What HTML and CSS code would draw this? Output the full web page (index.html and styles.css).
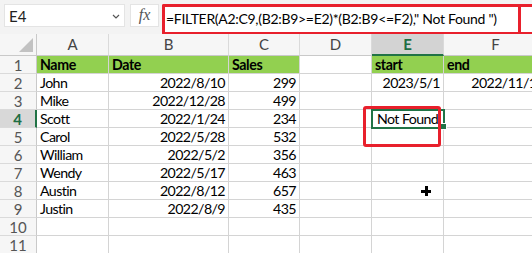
FILE: index.html
```html
<!DOCTYPE html>
<html>

<head>
	<meta charset="utf-8">
	<link rel="stylesheet" href="styles.css">
</head>

<body>
	<div class="bar">
		<div class="namebox">
			<span>E4</span>
			<svg class="chev" width="8" height="5" viewBox="0 0 8 5"><path d="M1 1 L4 4 L7 1" fill="none" stroke="#555" stroke-width="1.2"/></svg>
		</div>
		<div class="fxbox">fx</div>
		<div class="formula">=FILTER(A2:C9,(B2:B9&gt;=E2)*(B2:B9&lt;=F2),"&nbsp;Not Found&nbsp;")</div>
	</div>

	<div class="sheet">
		<div class="hd corner"><span class="tri"></span></div>
		<div class="hd">A</div>
		<div class="hd">B</div>
		<div class="hd">C</div>
		<div class="hd">D</div>
		<div class="hd on">E</div>
		<div class="hd">F</div>

		<div class="rh">1</div>
		<div class="c g b">Name</div>
		<div class="c g b">Date</div>
		<div class="c g b">Sales</div>
		<div class="c"></div>
		<div class="c g b">start</div>
		<div class="c g b">end</div>

		<div class="rh">2</div>
		<div class="c">John</div>
		<div class="c r">2022/8/10</div>
		<div class="c r">299</div>
		<div class="c"></div>
		<div class="c r">2023/5/1</div>
		<div class="c r">2022/11/15</div>

		<div class="rh">3</div>
		<div class="c">Mike</div>
		<div class="c r">2022/12/28</div>
		<div class="c r">499</div>
		<div class="c"></div>
		<div class="c"></div>
		<div class="c"></div>

		<div class="rh on">4</div>
		<div class="c">Scott</div>
		<div class="c r">2022/1/24</div>
		<div class="c r">234</div>
		<div class="c"></div>
		<div class="c sel">&nbsp;Not Found&nbsp;</div>
		<div class="c"></div>

		<div class="rh">5</div>
		<div class="c">Carol</div>
		<div class="c r">2022/5/28</div>
		<div class="c r">532</div>
		<div class="c"></div>
		<div class="c"></div>
		<div class="c"></div>

		<div class="rh">6</div>
		<div class="c">William</div>
		<div class="c r">2022/5/2</div>
		<div class="c r">356</div>
		<div class="c"></div>
		<div class="c"></div>
		<div class="c"></div>

		<div class="rh">7</div>
		<div class="c">Wendy</div>
		<div class="c r">2022/5/17</div>
		<div class="c r">463</div>
		<div class="c"></div>
		<div class="c"></div>
		<div class="c"></div>

		<div class="rh">8</div>
		<div class="c">Austin</div>
		<div class="c r">2022/8/12</div>
		<div class="c r">657</div>
		<div class="c"></div>
		<div class="c"></div>
		<div class="c"></div>

		<div class="rh">9</div>
		<div class="c">Justin</div>
		<div class="c r">2022/8/9</div>
		<div class="c r">435</div>
		<div class="c"></div>
		<div class="c"></div>
		<div class="c"></div>

		<div class="rh">10</div>
		<div class="c"></div>
		<div class="c"></div>
		<div class="c"></div>
		<div class="c"></div>
		<div class="c"></div>
		<div class="c"></div>

		<div class="rh">11</div>
		<div class="c"></div>
		<div class="c"></div>
		<div class="c"></div>
		<div class="c"></div>
		<div class="c"></div>
		<div class="c"></div>

		<!-- overlays -->
		<div class="mark"></div>
		<div class="cursor"></div>
	</div>
</body>

</html>
```

FILE: styles.css
```css
body {
	margin: 0;
	width: 532px;
	height: 253px;
	overflow: hidden;
	background: #fff;
	font-family: Lato, "Liberation Sans", sans-serif;
	color: #000;
}

.bar {
	display: flex;
	gap: 4px;
	height: 34px;
	padding: 4px 0 0 4px;
	box-sizing: border-box;
	background: #f3f3f3;
}

.namebox {
	width: 121px;
	height: 23px;
	box-sizing: border-box;
	background: #fff;
	border: 1px solid #e4e4e4;
	display: flex;
	align-items: center;
	justify-content: space-between;
	padding: 0 4px 0 4px;
	font-size: 15px;
	color: #222;
}

.chev {
	margin-top: 1px;
}

.fxbox {
	width: 29px;
	height: 23px;
	margin-left: 1px;
	box-sizing: border-box;
	background: #fff;
	border: 1px solid #e4e4e4;
	font-family: "Liberation Serif", serif;
	font-style: italic;
	font-size: 16px;
	color: #555;
	text-align: center;
	line-height: 20px;
}

.formula {
	flex: 1;
	height: 31px;
	margin-left: -1px;
	box-sizing: border-box;
	background: #fff;
	border: 3px solid #e8202c;
	border-right: none;
	border-radius: 2px 0 0 2px;
	padding-left: 1px;
	font-size: 14px;
	letter-spacing: -0.3px;
	line-height: 24px;
	white-space: nowrap;
	overflow: hidden;
	position: relative;
}

.formula::after {
	content: "";
	position: absolute;
	left: 353px;
	top: -3px;
	width: 3px;
	height: 31px;
	background: #e8202c;
}

.sheet {
	position: relative;
	display: grid;
	grid-template-columns: 37px 72px 120px 71px 72px 72px 104px;
	grid-template-rows: 22px repeat(11, 18px);
	width: 548px;
	font-size: 14.2px;
	letter-spacing: -0.6px;
}

.hd {
	background: #f6f6f6;
	border-right: 1px solid #dadada;
	border-bottom: 1px solid #c9c9c9;
	text-align: center;
	line-height: 21px;
	color: #444;
	font-size: 15px;
	letter-spacing: 0;
}

.hd.on {
	background: #d3d3d3;
	color: #1f6e43;
	font-weight: bold;
	border-bottom: 2px solid #217346;
}

.corner {
	position: relative;
	border-right-color: #c9c9c9;
}

.tri {
	position: absolute;
	right: 3px;
	bottom: 3px;
	width: 0;
	height: 0;
	border-left: 14px solid transparent;
	border-bottom: 14px solid #c2c2c2;
}

.rh {
	background: #f6f6f6;
	border-right: 1px solid #c9c9c9;
	border-bottom: 1px solid #dadada;
	text-align: center;
	line-height: 18px;
	color: #555;
	font-size: 15px;
	letter-spacing: 0;
}

.rh.on {
	background: #d8d8d8;
	color: #1f6e43;
	font-weight: bold;
	border-right: 2px solid #217346;
}

.c {
	border-right: 1px solid #d4d4d4;
	border-bottom: 1px solid #d4d4d4;
	padding: 0 3px;
	line-height: 18px;
	white-space: nowrap;
	overflow: hidden;
}

.c.r {
	text-align: right;
}

.c.g {
	background: #92d050;
}

.c.b {
	font-weight: bold;
	letter-spacing: -0.4px;
}

.c.sel {
	outline: 2px solid #217346;
	outline-offset: -1px;
	position: relative;
	overflow: visible;
	padding-left: 2px;
}

.c.sel::after {
	content: "";
	position: absolute;
	right: -4px;
	bottom: -3px;
	width: 5px;
	height: 5px;
	background: #217346;
	border: 1px solid #fff;
}

.mark {
	position: absolute;
	left: 363px;
	top: 72px;
	width: 78px;
	height: 41px;
	box-sizing: border-box;
	border: 3px solid #e8202c;
	border-radius: 3px;
}

.cursor {
	position: absolute;
	left: 421px;
	top: 152px;
	width: 10px;
	height: 10px;
	background:
		linear-gradient(#000, #000) center / 10px 3px no-repeat,
		linear-gradient(#000, #000) center / 3px 10px no-repeat;
}
```
